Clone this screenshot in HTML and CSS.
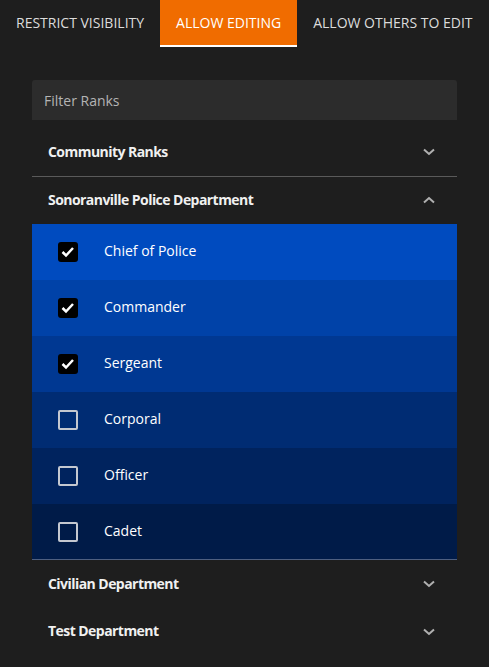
FILE: index.html
```html
<!DOCTYPE html>
<html>
<head>
<meta charset="utf-8">
<link rel="stylesheet" href="styles.css">
</head>
<body>
<div class="tabs">
  <div class="tab">RESTRICT VISIBILITY</div>
  <div class="tab active">ALLOW EDITING</div>
  <div class="tab">ALLOW OTHERS TO EDIT</div>
</div>
<div class="panel">
  <div class="filter">Filter Ranks</div>
  <div class="group">
    <div class="ghead"><span>Community Ranks</span><svg class="chev" viewBox="0 0 12 8"><path d="M1 1.5 L6 6 L11 1.5"/></svg></div>
  </div>
  <div class="group open">
    <div class="ghead"><span>Sonoranville Police Department</span><svg class="chev" viewBox="0 0 12 8"><path d="M1 6.5 L6 2 L11 6.5"/></svg></div>
    <div class="ranks">
      <div class="rank r1"><span class="cb on"><svg viewBox="0 0 20 20"><path d="M4.5 10 L8 13.5 L15 6"/></svg></span><span class="lbl">Chief of Police</span></div>
      <div class="rank r2"><span class="cb on"><svg viewBox="0 0 20 20"><path d="M4.5 10 L8 13.5 L15 6"/></svg></span><span class="lbl">Commander</span></div>
      <div class="rank r3"><span class="cb on"><svg viewBox="0 0 20 20"><path d="M4.5 10 L8 13.5 L15 6"/></svg></span><span class="lbl">Sergeant</span></div>
      <div class="rank r4"><span class="cb"></span><span class="lbl">Corporal</span></div>
      <div class="rank r5"><span class="cb"></span><span class="lbl">Officer</span></div>
      <div class="rank r6"><span class="cb"></span><span class="lbl">Cadet</span></div>
    </div>
  </div>
  <div class="group">
    <div class="ghead"><span>Civilian Department</span><svg class="chev" viewBox="0 0 12 8"><path d="M1 1.5 L6 6 L11 1.5"/></svg></div>
  </div>
  <div class="group">
    <div class="ghead"><span>Test Department</span><svg class="chev" viewBox="0 0 12 8"><path d="M1 1.5 L6 6 L11 1.5"/></svg></div>
  </div>
</div>
</body>
</html>
```
FILE: styles.css
```css
html, body {
  margin: 0;
  padding: 0;
  background: #1e1e1e;
  font-family: "Open Sans", "Noto Sans", sans-serif;
  color: #fff;
}
.tabs {
  display: flex;
  height: 47px;
}
.tab {
  height: 45px;
  display: flex;
  align-items: center;
  justify-content: center;
  font-size: 14px;
  color: #dcdcdc;
  padding: 0 16px;
  white-space: nowrap;
  border-bottom: 2px solid transparent;
}
.tab.active {
  background: #f06c00;
  color: #fff;
  border-bottom-color: #fff;
}
.panel {
  margin: 33px 32px 0 32px;
}
.filter {
  height: 40px;
  background: #2c2c2c;
  border-radius: 3px 3px 0 0;
  font-size: 14px;
  color: #b4b4b4;
  display: flex;
  align-items: center;
  padding-left: 12px;
  margin-bottom: 8px;
}
.ghead {
  height: 48px;
  box-sizing: border-box;
  padding: 0 22px 2px 16px;
  display: flex;
  align-items: center;
  justify-content: space-between;
  font-size: 14px;
  font-weight: 700;
  color: #f0f0f0;
  letter-spacing: -0.55px;
}
.ghead .chev { margin-top: 2px; }
.group.open .ghead { height: 47px; padding-bottom: 3px; }
.group:last-child .ghead { padding-bottom: 3px; }
.group + .group.open { border-top: 1px solid #5a5a5a; }
.chev {
  width: 12px;
  height: 8px;
  fill: none;
  stroke: #b0b0b0;
  stroke-width: 2;
}
.ranks {
  border-bottom: 1px solid #4e5f80;
}
.rank {
  height: 56px;
  display: flex;
  align-items: center;
  padding-left: 26px;
  gap: 26px;
  font-size: 14px;
  color: #fff;
}
.lbl { padding-bottom: 3px; }
.r1 { background: #004bbf; }
.r2 { background: #0042a8; }
.r3 { background: #003892; }
.r4 { background: #002c73; }
.r5 { background: #00235e; }
.r6 { background: #001b48; height: 55px; }
.cb {
  width: 16px;
  height: 16px;
  border: 2px solid #c4c8d0;
  border-radius: 2px;
  display: flex;
}
.cb.on {
  width: 20px;
  height: 20px;
  border: none;
  background: #000;
  border-radius: 3px;
}
.cb svg {
  width: 20px;
  height: 20px;
  fill: none;
  stroke: #fff;
  stroke-width: 2.5;
}
```
